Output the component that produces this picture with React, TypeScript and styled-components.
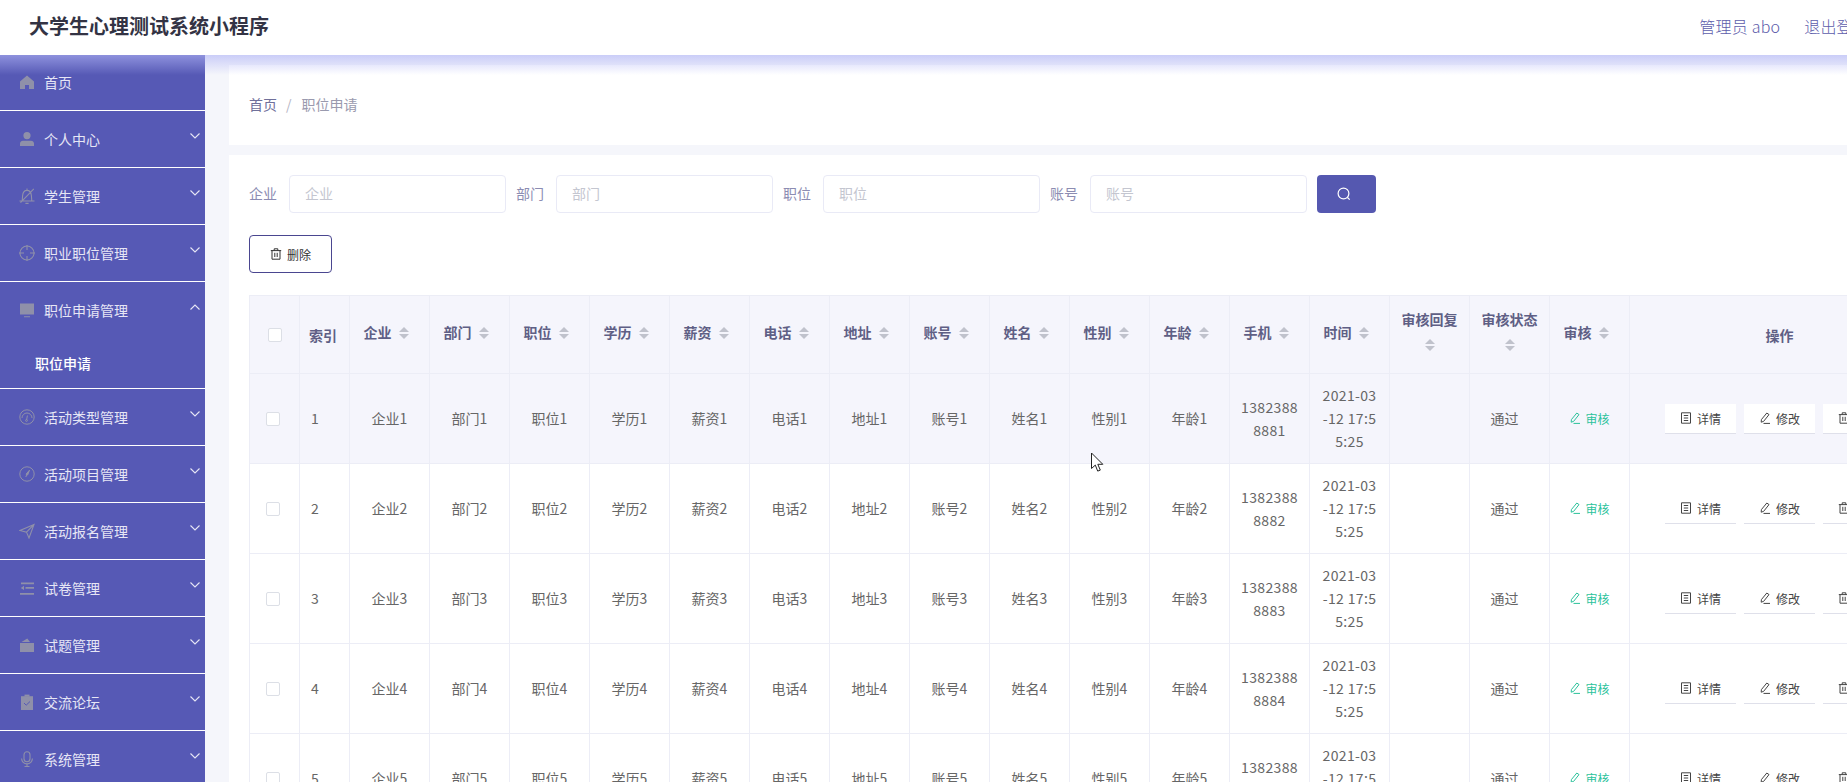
import React from 'react';
import styled, { createGlobalStyle } from 'styled-components';

const Global = createGlobalStyle`
  html, body { margin: 0; padding: 0; height: 100%; overflow: hidden; background: #f5f6fb; }
  body { font-family: "Noto Sans CJK SC", "Noto Sans", sans-serif; font-size: 14px; }
  #root { width: 1847px; height: 782px; overflow: hidden; position: relative; }
  * { box-sizing: border-box; }
`;

const Page = styled.div`
  width: 1970px;
  height: 782px;
  display: flex;
  flex-direction: column;
`;

const Header = styled.header`
  position: relative;
  z-index: 2;
  height: 55px;
  flex: none;
  background: #fff;
  display: flex;
  align-items: center;
  padding: 0 101px 3px 29px;
  &::after {
    content: '';
    position: absolute;
    left: 0;
    right: 0;
    top: 100%;
    height: 20px;
    pointer-events: none;
    background: linear-gradient(to bottom, rgba(176, 180, 246, 0.62), rgba(176, 180, 246, 0));
  }
`;

const Title = styled.h1`
  margin: 0;
  font-size: 20px;
  font-weight: 700;
  color: #333344;
  line-height: 28px;
`;

const HeaderLinks = styled.div`
  margin-left: auto;
  display: flex;
  gap: 24px;
  font-size: 16px;
  font-weight: 300;
  letter-spacing: 0.2px;
  color: #5d5dab;
  line-height: 24px;
`;

const Body = styled.div`
  flex: 1;
  display: flex;
  min-height: 0;
`;

const Sidebar = styled.nav`
  width: 205px;
  flex: none;
  margin-top: -1px;
  background: #5659b5;
  color: #e6e6f5;
`;

const MenuItem = styled.div`
  border-bottom: 1px solid #fff;
`;

const MenuTitle = styled.div`
  height: 56px;
  display: flex;
  align-items: center;
  padding: 0 5px 0 19px;
  gap: 9px;
  line-height: 20px;
`;

const MenuIcon = styled.svg`
  width: 16px;
  height: 16px;
  flex: none;
  color: #8f90a9;
`;

const Chevron = styled.svg`
  width: 10px;
  height: 6px;
  margin-left: auto;
  margin-bottom: 6px;
  flex: none;
  color: #e6e6f5;
`;

const SubItem = styled.div`
  height: 50px;
  display: flex;
  align-items: center;
  padding-left: 35px;
  color: #fff;
  font-weight: 500;
`;

const Main = styled.main`
  flex: 1;
  min-width: 0;
  padding: 10px 20px 0 24px;
  display: flex;
  flex-direction: column;
  gap: 10px;
  background: #f5f6fb;
`;

const BreadcrumbCard = styled.div`
  height: 80px;
  flex: none;
  background: #fff;
  display: flex;
  align-items: center;
  padding: 0 0 2px 20px;
  color: #9a9aae;
`;

const Crumb = styled.span`
  color: #70709a;
`;

const Sep = styled.span`
  margin: 0 10px 0 9px;
  color: #b5b5c5;
`;

const Card = styled.section`
  background: #fff;
  padding: 20px;
  flex: 1;
`;

const SearchRow = styled.div`
  display: flex;
  align-items: center;
  margin-bottom: 22px;
`;

const Field = styled.label`
  display: flex;
  align-items: center;
  gap: 12px;
  margin-right: 10px;
  color: #8c8cb2;
`;

const FieldLabel = styled.span`
  margin-top: -2px;
`;

const Input = styled.input`
  width: 217px;
  height: 38px;
  border: 1px solid #e9eaf6;
  border-radius: 4px;
  padding: 0 15px 2px;
  font: inherit;
  outline: none;
  background: #fff;
  &::placeholder { color: #c4c6d0; opacity: 1; }
`;

const SearchButton = styled.button`
  width: 59px;
  height: 38px;
  border: none;
  border-radius: 4px;
  background: #5558b0;
  color: #fff;
  display: flex;
  align-items: center;
  justify-content: center;
  padding: 0 5px 0 0;
`;

const ToolRow = styled.div`
  margin-bottom: 22px;
`;

const DeleteButton = styled.button`
  width: 83px;
  height: 38px;
  border: 1px solid #4a4690;
  border-radius: 4px;
  background: #fff;
  color: #333;
  font: inherit;
  font-size: 12px;
  display: inline-flex;
  align-items: center;
  justify-content: center;
  gap: 5px;
  padding: 0;
`;

const Table = styled.table`
  width: 1681px;
  table-layout: fixed;
  border-collapse: collapse;
  border: 1px solid #ecedf6;
`;

const HeadCell = styled.th<{ $pad?: string; $align?: string }>`
  height: 78px;
  padding: ${p => p.$pad ?? '0 10px'};
  border: 1px solid #ecedf6;
  background: #f5f5fc;
  color: #5f5f85;
  font-size: 14px;
  font-weight: 700;
  line-height: 23px;
  text-align: ${p => p.$align ?? 'center'};
  vertical-align: middle;
`;

const Row = styled.tr<{ $hover?: boolean }>`
  background: ${p => (p.$hover ? '#f5f5fc' : '#fff')};
`;

const Cell = styled.td<{ $pad?: string; $align?: string }>`
  height: 90px;
  padding: ${p => p.$pad ?? '0 10px'};
  border: 1px solid #ecedf6;
  color: #666;
  font-size: 14px;
  line-height: 23px;
  text-align: ${p => p.$align ?? 'center'};
  vertical-align: middle;
  word-break: break-all;
`;

const NumberCell = styled(Cell)`
  letter-spacing: 0.35px;
  line-break: anywhere;
`;

const Check = styled.span`
  display: block;
  width: 14px;
  height: 14px;
  border: 1px solid #dcdfe6;
  border-radius: 2px;
  background: #fff;
`;

const SortWrap = styled.span`
  display: inline-flex;
  flex-direction: column;
  align-items: center;
  justify-content: center;
  gap: 2px;
  width: 24px;
  height: 34px;
  vertical-align: middle;
  margin-top: -3px;
`;

const Caret = styled.i<{ $down?: boolean }>`
  display: block;
  width: 0;
  height: 0;
  border-left: 5px solid transparent;
  border-right: 5px solid transparent;
  ${p => (p.$down ? 'border-top: 5px solid #c0c2cc;' : 'border-bottom: 5px solid #c0c2cc;')}
`;

const AuditLink = styled.span`
  display: inline-flex;
  align-items: center;
  gap: 4px;
  font-size: 12px;
  color: #2bc29b;
  white-space: nowrap;
`;

const ActionGroup = styled.div`
  display: flex;
  gap: 8px;
  padding-left: 25px;
`;

const ActionButton = styled.button`
  width: 71px;
  height: 30px;
  flex: none;
  border: none;
  border-bottom: 1px solid #dfe0ea;
  background: #fff;
  color: #444;
  font: inherit;
  font-size: 12px;
  display: inline-flex;
  align-items: center;
  justify-content: center;
  gap: 5px;
  padding: 0;
`;

const Pointer = styled.svg`
  position: absolute;
  left: 1090px;
  top: 452px;
  width: 14px;
  height: 21px;
  z-index: 5;
`;

const Chev = ({ up }: { up?: boolean }) => (
  <Chevron viewBox="0 0 10 6" fill="none" stroke="currentColor" strokeWidth="1.1">
    <path d={up ? 'M.5 5.5 5 1l4.5 4.5' : 'M.5.5 5 5 9.5.5'} />
  </Chevron>
);

const Ico = {
  home: <path fill="currentColor" d="M8 1.5 15 7.6V15h-5v-4H6v4H1V7.6z" />,
  user: <path fill="currentColor" d="M8 1a3.6 3.6 0 1 1 0 7.2A3.6 3.6 0 0 1 8 1zM4 9.8h8c1.6 0 3 1.2 3 2.8V15H1v-2.4c0-1.6 1.4-2.8 3-2.8z" />,
  bell: <path fill="none" stroke="currentColor" strokeWidth="1.1" d="M.5 13h15M3.2 13l.4-5.4C3.9 4.3 5.8 2.4 8 2.4s4.1 1.9 4.4 5.2l.4 5.4M6.4 15.4h3.2M8 .4v2M1.5 14.6 14.8.8" />,
  cross: <g fill="none" stroke="currentColor" strokeWidth="1.1"><circle cx="8" cy="8" r="7" /><path d="M8 0v5M8 11v5M0 8h5M11 8h5" /></g>,
  monitor: <path fill="currentColor" d="M1 1.5h14v11H1zM5 14.2h6v1H5z" />,
  gauge: <g fill="none" stroke="currentColor" strokeWidth="1"><circle cx="8" cy="8" r="7.2" /><path d="M3 9a5 5 0 0 1 10 0M8.4 6.5 7.6 11" /><circle cx="7.5" cy="11.5" r=".9" /></g>,
  compass: <g fill="none" stroke="currentColor" strokeWidth="1"><circle cx="8" cy="8" r="7.2" /><path fill="currentColor" d="M10.5 4.2 8.6 9 7 8.2z" /><path d="M7.6 9 6.8 11" /></g>,
  nav: <path fill="none" stroke="currentColor" strokeWidth="1.1" d="M15 1.5 1 7.5l6.5 1.6L10 15z M15 1.5 7.5 9.1" />,
  indent: <path fill="currentColor" d="M2 2.5h13v1.7H2zM6.5 7h8.5v1.7H6.5zM1 13h14v1.7H1zM5 5.8v4.2L1.8 7.9z" />,
  wallet: <path fill="currentColor" d="M1 6h14v9H1zM2.5 5 8.3 1.4 11 5zM11 9.2h4v2h-4z" />,
  clip: <g><path fill="currentColor" d="M2 2.2h12V16H2z" /><path fill="currentColor" d="M5.5.6h5v2h-5z" /><path fill="none" stroke="#5659b5" strokeWidth="1" d="M5 9l2.2 2.2L11 7.5" /></g>,
  mic: <g fill="none" stroke="currentColor" strokeWidth="1.1"><rect x="5" y=".8" width="6" height="10" rx="3" /><path d="M2.6 7.5a5.4 5.4 0 0 0 10.8 0M8 13v2.4M5.5 15.5h5" /></g>,
};

const menus: { k: keyof typeof Ico; t: string; arrow?: boolean; sub?: string }[] = [
  { k: 'home', t: '首页' },
  { k: 'user', t: '个人中心', arrow: true },
  { k: 'bell', t: '学生管理', arrow: true },
  { k: 'cross', t: '职业职位管理', arrow: true },
  { k: 'monitor', t: '职位申请管理', sub: '职位申请' },
  { k: 'gauge', t: '活动类型管理', arrow: true },
  { k: 'compass', t: '活动项目管理', arrow: true },
  { k: 'nav', t: '活动报名管理', arrow: true },
  { k: 'indent', t: '试卷管理', arrow: true },
  { k: 'wallet', t: '试题管理', arrow: true },
  { k: 'clip', t: '交流论坛', arrow: true },
  { k: 'mic', t: '系统管理', arrow: true },
];

const DocIcon = () => (
  <svg width="12" height="12" viewBox="0 0 12 12" fill="none" stroke="currentColor" strokeWidth="1">
    <path d="M1.5.8h9v10.4h-9zM3.8 3.5h4.4M3.8 6h4.4M3.8 8.5h4.4" />
  </svg>
);
const EditIcon = () => (
  <svg width="12" height="12" viewBox="0 0 12 12" fill="none" stroke="currentColor" strokeWidth="1">
    <path d="M7.8 1 10 2.6 4.6 9.4l-2.4.8.2-2.6zM4.5 11.4h6.5" />
  </svg>
);
const TrashIcon = () => (
  <svg width="12" height="12" viewBox="0 0 12 12" fill="none" stroke="currentColor" strokeWidth="1">
    <path d="M.8 2.6h10.4M4.2 2.6V.8h3.6v1.8M2 2.6v8.6h8V2.6M4.8 4.8v4.2M7.2 4.8v4.2" />
  </svg>
);
const SearchIcon = () => (
  <svg width="14" height="14" viewBox="0 0 14 14" fill="none" stroke="currentColor" strokeWidth="1.2">
    <circle cx="6.5" cy="6.5" r="5.4" />
    <path d="m10.5 10.5 2.2 2.2" />
  </svg>
);

const fields = ['企业', '部门', '职位', '账号'];
const sortCols = ['企业', '部门', '职位', '学历', '薪资', '电话', '地址', '账号', '姓名', '性别', '年龄', '手机', '时间', '审核回复', '审核状态', '审核'];
const dataCols = ['企业', '部门', '职位', '学历', '薪资', '电话', '地址', '账号', '姓名', '性别', '年龄'];

const Sort = () => (
  <SortWrap>
    <Caret />
    <Caret $down />
  </SortWrap>
);

export default function App() {
  return (
    <Page>
      <Global />
      <Header>
        <Title>大学生心理测试系统小程序</Title>
        <HeaderLinks>
          <span>管理员 abo</span>
          <span>退出登录</span>
        </HeaderLinks>
      </Header>
      <Body>
        <Sidebar>
          {menus.map(m => (
            <MenuItem key={m.t}>
              <MenuTitle>
                <MenuIcon viewBox="0 0 16 16">{Ico[m.k]}</MenuIcon>
                <span>{m.t}</span>
                {m.arrow && <Chev />}
                {m.sub && <Chev up />}
              </MenuTitle>
              {m.sub && <SubItem>{m.sub}</SubItem>}
            </MenuItem>
          ))}
        </Sidebar>
        <Main>
          <BreadcrumbCard>
            <Crumb>首页</Crumb>
            <Sep>/</Sep>
            <span>职位申请</span>
          </BreadcrumbCard>
          <Card>
            <SearchRow>
              {fields.map(f => (
                <Field key={f}>
                  <FieldLabel>{f}</FieldLabel>
                  <Input placeholder={f} />
                </Field>
              ))}
              <SearchButton aria-label="搜索"><SearchIcon /></SearchButton>
            </SearchRow>
            <ToolRow>
              <DeleteButton><TrashIcon />删除</DeleteButton>
            </ToolRow>
            <Table>
              <colgroup>
                <col width={50} />
                <col width={50} />
                {sortCols.map(c => <col key={c} width={80} />)}
                <col width={300} />
              </colgroup>
              <thead>
                <tr>
                  <HeadCell $pad="0 0 0 18px"><Check /></HeadCell>
                  <HeadCell $pad="2px 0 0 9px" $align="left">索引</HeadCell>
                  {sortCols.map(c => (
                    <HeadCell key={c}>{c}<Sort /></HeadCell>
                  ))}
                  <HeadCell $pad="2px 10px 0">操作</HeadCell>
                </tr>
              </thead>
              <tbody>
                {[1, 2, 3, 4, 5].map(i => (
                  <Row key={i} $hover={i === 1}>
                    <Cell $pad="0 0 0 16px"><Check /></Cell>
                    <Cell $pad="0 0 0 11px" $align="left">{i}</Cell>
                    {dataCols.map(c => <Cell key={c}>{c}{i}</Cell>)}
                    <NumberCell>{`1382388888${i}`}</NumberCell>
                    <NumberCell $pad="0 12px">2021-03-12 17:55:25</NumberCell>
                    <Cell />
                    <Cell $pad="0 15px 0 5px">通过</Cell>
                    <Cell><AuditLink><EditIcon />审核</AuditLink></Cell>
                    <Cell $pad="0 0 0 10px">
                      <ActionGroup>
                        <ActionButton><DocIcon />详情</ActionButton>
                        <ActionButton><EditIcon />修改</ActionButton>
                        <ActionButton><TrashIcon />删除</ActionButton>
                      </ActionGroup>
                    </Cell>
                  </Row>
                ))}
              </tbody>
            </Table>
          </Card>
        </Main>
      </Body>
      <Pointer viewBox="0 0 14 21">
        <path d="M1.5 1v15.5l3.8-3.4 2.4 6 2.6-1-2.5-5.8h5z" fill="#fff" stroke="#222" strokeWidth="1" />
      </Pointer>
    </Page>
  );
}
